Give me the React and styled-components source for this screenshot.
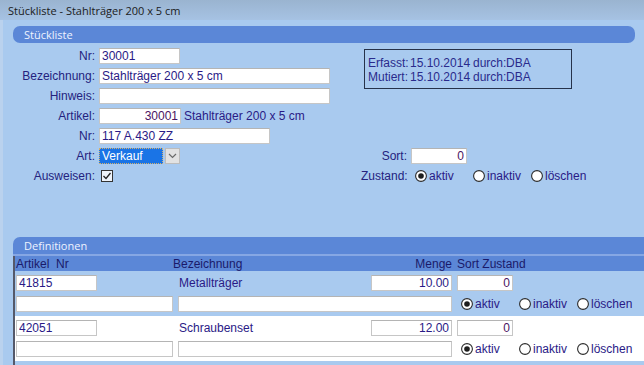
import React from "react"
import styled, { createGlobalStyle } from "styled-components"

const bg = "#a9caef"
const bar = "#5b87d7"
const ink = "#24227e"
const field = "#2a1a86"
const numInk = "#4a1462"

const GlobalStyle = createGlobalStyle`
    html, body { margin: 0; padding: 0; }
    body {
        width: 644px;
        height: 365px;
        overflow: hidden;
        background: ${bg};
        font-family: "Liberation Sans", Arial, sans-serif;
        font-size: 12px;
    }
`

let Window = styled.div`
    width: 644px;
    height: 365px;
    display: flex;
    flex-direction: column;
    background: ${bg};
`
let TitleBar = styled.div`
    height: 20px;
    line-height: 21px;
    padding-left: 8px;
    background: linear-gradient(#9ab4d0, #a6c2e3);
    color: #1b1b1b;
    font-family: "Open Sans", "Noto Sans", sans-serif;
    font-size: 11px;
`
let Body = styled.div`
    flex: 1;
    display: flex;
    flex-direction: column;
    border-left: 3px solid #bad2ee;
    padding-top: 6px;
`
let SectionHeader = styled.div`
    height: 17px;
    line-height: 17px;
    margin: 0 ${(p) => (p.open ? "0" : "9px")} 0 10px;
    padding-left: 11px;
    background: ${bar};
    border-radius: ${(p) => (p.open ? "7px 0 0 0" : "7px")};
    color: #eef3ff;
    font-family: "Open Sans", "Noto Sans", sans-serif;
    font-size: 11px;
`
let FormGrid = styled.div`
    display: grid;
    grid-template-columns: 82px 258px 46px 1fr;
    grid-auto-rows: 20px;
    column-gap: 4px;
    align-items: center;
    padding-left: 10px;
    margin-top: 3px;
`
let Label = styled.div`
    text-align: right;
    white-space: nowrap;
    color: ${ink};
    grid-column: ${(p) => p.col || 1};
`
let Cell = styled.div`
    display: flex;
    align-items: center;
    gap: 3px;
    color: ${field};
    white-space: nowrap;
    grid-column: ${(p) => p.col || 2};
`
let Input = styled.input`
    box-sizing: border-box;
    width: ${(p) => p.w}px;
    height: 16px;
    margin: 0;
    padding: 0 2px;
    border: 1px solid #c6c6c6;
    border-top-color: #b4b4b4;
    background: #fff;
    color: ${(p) => (p.num ? numInk : field)};
    font-family: "Liberation Sans", Arial, sans-serif;
    font-size: 12px;
    text-align: ${(p) => (p.right ? "right" : "left")};
    outline: none;
`
let InfoBox = styled.div`
    grid-column: 3 / 5;
    grid-row: 1 / 4;
    align-self: start;
    margin: 3px 0 0 3px;
    width: 208px;
    box-sizing: border-box;
    padding: 6px 3px 4px;
    border: 1px solid #26324a;
    display: grid;
    grid-template-columns: 42px 63px 33px auto;
    grid-auto-rows: 14px;
    align-items: center;
    color: #2a2a8c;
`
let SelectBox = styled.div`
    display: flex;
    align-items: center;
    gap: 2px;
`
let SelectValue = styled.div`
    box-sizing: border-box;
    width: 64px;
    height: 16px;
    line-height: 14px;
    padding-left: 2px;
    background: #1a74e6;
    border: 1px dotted #d6b06a;
    color: #fff;
`
let DropButton = styled.div`
    box-sizing: border-box;
    width: 15px;
    height: 16px;
    display: flex;
    align-items: center;
    justify-content: center;
    background: #e2e2e2;
    border: 1px solid #bcbcbc;
`
let CheckBox = styled.div`
    display: flex;
    margin-left: 2px;
`
let RadioGroup = styled.div`
    display: flex;
    align-items: center;
    margin-left: 4px;
`
let RadioOption = styled.div`
    width: 58px;
    display: flex;
    align-items: center;
    gap: 2px;
    color: ${field};
`
let Definitions = styled.div`
    margin-top: 51px;
    display: flex;
    flex-direction: column;
`
let DefStripe = styled.div`
    height: 2px;
    margin-left: 10px;
    background: #86a7e4;
`
let Table = styled.div`
    margin-left: 10px;
    border-left: 2px solid #55596a;
    padding-bottom: 20px;
`
let ColumnHeader = styled.div`
    display: grid;
    grid-template-columns: 157px 274px 1fr;
    column-gap: 5px;
    height: 15px;
    line-height: 16px;
    padding-left: 1px;
    background: ${bar};
    color: #1a1a6a;
    white-space: pre;
`
let HeadSplit = styled.div`
    display: flex;
    justify-content: space-between;
    margin-left: -5px;
`
let Row = styled.div`
    display: grid;
    grid-template-columns: 157px 274px 1fr;
    grid-template-rows: 16px 16px;
    column-gap: 5px;
    row-gap: 5px;
    align-items: center;
    padding: 4px 0 4px 1px;
    background: ${(p) => (p.white ? "#fff" : "transparent")};
`
let RowSplit = styled.div`
    display: flex;
    align-items: center;
    justify-content: space-between;
    padding-left: 1px;
    color: ${field};
`

let Radio = ({ checked }) => (
    <svg width="12" height="12" viewBox="0 0 12 12">
        <circle cx="6" cy="6" r="5.4" fill="#fff" stroke="#2b2b2b" strokeWidth="1.1" />
        {checked && <circle cx="6" cy="6" r="2.8" fill="#1d1d1d" />}
    </svg>
)

let Zustand = ({ value }) => (
    <RadioGroup>
        {["aktiv", "inaktiv", "löschen"].map((opt) => (
            <RadioOption key={opt}>
                <Radio checked={opt === value} />
                {opt}
            </RadioOption>
        ))}
    </RadioGroup>
)

let definitions = [
    { artikel: "41815", name: "Metallträger", menge: "10.00", sort: "0" },
    { artikel: "42051", name: "Schraubenset", menge: "12.00", sort: "0" },
]

export default function App() {
    return (
        <Window>
            <GlobalStyle />
            <TitleBar>Stückliste - Stahlträger 200 x 5 cm</TitleBar>
            <Body>
                <SectionHeader>Stückliste</SectionHeader>
                <FormGrid>
                    <Label>Nr:</Label>
                    <Cell><Input w={81} value="30001" readOnly /></Cell>
                    <InfoBox>
                        <span>Erfasst:</span><span>15.10.2014</span><span>durch:</span><span>DBA</span>
                        <span>Mutiert:</span><span>15.10.2014</span><span>durch:</span><span>DBA</span>
                    </InfoBox>

                    <Label>Bezeichnung:</Label>
                    <Cell><Input w={231} value="Stahlträger 200 x 5 cm" readOnly /></Cell>

                    <Label>Hinweis:</Label>
                    <Cell><Input w={231} value="" readOnly /></Cell>

                    <Label>Artikel:</Label>
                    <Cell>
                        <Input w={82} right num value="30001" readOnly />
                        Stahlträger 200 x 5 cm
                    </Cell>

                    <Label>Nr:</Label>
                    <Cell><Input w={171} value="117 A.430 ZZ" readOnly /></Cell>

                    <Label>Art:</Label>
                    <Cell>
                        <SelectBox>
                            <SelectValue>Verkauf</SelectValue>
                            <DropButton>
                                <svg width="9" height="6" viewBox="0 0 9 6">
                                    <path d="M1 1 L4.5 4.5 L8 1" fill="none" stroke="#6a6a6a" strokeWidth="1.2" />
                                </svg>
                            </DropButton>
                        </SelectBox>
                    </Cell>
                    <Label col={3}>Sort:</Label>
                    <Cell col={4}><Input w={56} right num value="0" readOnly /></Cell>

                    <Label>Ausweisen:</Label>
                    <Cell>
                        <CheckBox>
                            <svg width="12" height="12" viewBox="0 0 12 12">
                                <rect x="0.5" y="0.5" width="11" height="11" fill="#eef3fa" stroke="#333" />
                                <path d="M2.5 6 L5 8.5 L9.5 3" fill="none" stroke="#222" strokeWidth="1.3" />
                            </svg>
                        </CheckBox>
                    </Cell>
                    <Label col={3}>Zustand:</Label>
                    <Cell col={4}><Zustand value="aktiv" /></Cell>
                </FormGrid>

                <Definitions>
                    <SectionHeader open>Definitionen</SectionHeader>
                    <DefStripe />
                    <Table>
                        <ColumnHeader>
                            <span>Artikel  Nr</span>
                            <HeadSplit><span>Bezeichnung</span><span>Menge</span></HeadSplit>
                            <span>Sort Zustand</span>
                        </ColumnHeader>
                        {definitions.map((d, i) => (
                            <Row key={d.artikel} white={i % 2 === 1}>
                                <div><Input w={81} value={d.artikel} readOnly /></div>
                                <RowSplit>
                                    {d.name}
                                    <Input w={81} right value={d.menge} readOnly />
                                </RowSplit>
                                <div><Input w={56} right num value={d.sort} readOnly /></div>
                                <Input w={157} value="" readOnly />
                                <Input w={274} value="" readOnly />
                                <Zustand value="aktiv" />
                            </Row>
                        ))}
                    </Table>
                </Definitions>
            </Body>
        </Window>
    )
}
